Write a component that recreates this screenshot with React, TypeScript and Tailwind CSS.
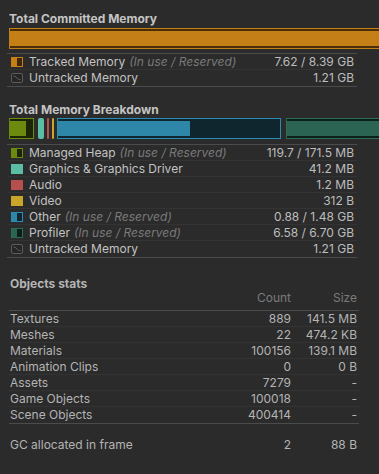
import React from "react";

type IconKind =
  | { t: "split"; border: string; fill: string; dark: string }
  | { t: "solid"; color: string }
  | { t: "untracked" };

function LegendIcon({ k }: { k: IconKind }) {
  if (k.t === "solid") {
    return <div className="w-[12px] h-[10px] shrink-0" style={{ background: k.color }} />;
  }
  if (k.t === "untracked") {
    return (
      <svg width="12" height="10" viewBox="0 0 12 10" className="shrink-0">
        <rect x="0.5" y="0.5" width="11" height="9" rx="1.5" fill="#262626" stroke="#5c5c5c" />
        <path d="M2.5 3 L5 3.8 L6.5 5.8 L9.5 6.8" fill="none" stroke="#5c5c5c" strokeWidth="1" />
      </svg>
    );
  }
  return (
    <div
      className="w-[12px] h-[10px] shrink-0 border flex"
      style={{ borderColor: k.border, background: k.dark }}
    >
      <div className="w-[5px] h-full" style={{ background: k.fill }} />
    </div>
  );
}

function LegendRow({
  icon,
  name,
  note,
  value,
  last,
}: {
  icon: IconKind;
  name: string;
  note?: boolean;
  value: string;
  last?: boolean;
}) {
  return (
    <div
      className={
        "flex items-center h-[16px] pl-[4px] pr-[3px] " +
        (last ? "" : "border-b border-[#333333]")
      }
    >
      <LegendIcon k={icon} />
      <span className="ml-[6px] text-[#c2c2c2] whitespace-nowrap">{name}</span>
      {note && (
        <span className="ml-[4px] italic text-[#7a7a7a] whitespace-nowrap">(In use / Reserved)</span>
      )}
      <span className="ml-auto text-[#bdbdbd] whitespace-nowrap">{value}</span>
    </div>
  );
}

function ObjRow({ name, count, size, last }: { name: string; count: string; size: string; last?: boolean }) {
  return (
    <div
      className={
        "grid grid-cols-[1fr_80px_66px] items-center h-[16px] pl-[1px] pr-[2px] " +
        (last ? "" : "border-b border-[#333333]")
      }
    >
      <span className="text-[#b4b4b4] whitespace-nowrap">{name}</span>
      <span className="text-right text-[#b4b4b4]">{count}</span>
      <span className="text-right text-[#b4b4b4]">{size}</span>
    </div>
  );
}

const orange = { t: "split" as const, border: "#c47f17", fill: "#c47f17", dark: "#3f2705" };
const olive = { t: "split" as const, border: "#6b8a0e", fill: "#6b8a0e", dark: "#1c2507" };
const blue = { t: "split" as const, border: "#2a8bb5", fill: "#2e86a8", dark: "#0f2530" };
const green = { t: "split" as const, border: "#2b6b58", fill: "#2b6453", dark: "#0c1f19" };

export default function App() {
  return (
    <div className="w-[379px] h-[474px] overflow-hidden bg-[#2b2b2b] font-['Inter','Noto_Sans',sans-serif] text-[12px] leading-[16px]">
      {/* Section 1 */}
      <div className="pt-[11px]">
        <div className="pl-[9px] h-[16px] font-bold text-[#c4c4c4]">Total Committed Memory</div>
        <div className="ml-[9px] mt-[1px] w-[390px] h-[21px] border border-[#c47f17] bg-[#4a2e07] pt-[2px]">
          <div className="h-[15px] bg-[#c47f17]" />
        </div>
        <div className="ml-[7px] mt-[4px] w-[350px] border-t border-b border-[#4b4b4b]">
          <LegendRow icon={orange} name="Tracked Memory" note value="7.62 / 8.39 GB" />
          <LegendRow icon={{ t: "untracked" }} name="Untracked Memory" value="1.21 GB" last />
        </div>
      </div>

      {/* Section 2 */}
      <div className="mt-[15px]">
        <div className="pl-[9px] h-[16px] font-bold text-[#c4c4c4]">Total Memory Breakdown</div>
        <div className="ml-[9px] flex h-[21px] w-[420px]">
          <div className="w-[25px] h-full border border-[#6b8a0e] bg-[#1c2507] pt-[2px] shrink-0">
            <div className="w-[16px] h-[15px] bg-[#6b8a0e]" />
          </div>
          <div className="ml-[4px] w-[6px] h-full rounded-[2px] bg-[#5bbda4] shrink-0" />
          <div className="ml-[3px] w-[2px] h-full rounded-[1px] bg-[#b5504f] shrink-0" />
          <div className="ml-[3px] w-[2px] h-full rounded-[1px] bg-[#c9a52a] shrink-0" />
          <div className="ml-[3px] w-[224px] h-full border border-[#2a8bb5] bg-[#10262f] pt-[2px] shrink-0">
            <div className="w-[132px] h-[15px] bg-[#2e86a8]" />
          </div>
          <div className="ml-[5px] w-[120px] h-full border border-[#2b6b58] bg-[#0c1f19] pt-[2px] shrink-0">
            <div className="w-full h-[15px] bg-[#2b6453]" />
          </div>
        </div>
        <div className="ml-[7px] mt-[5px] w-[350px] border-t border-b border-[#4b4b4b]">
          <LegendRow icon={olive} name="Managed Heap" note value="119.7 / 171.5 MB" />
          <LegendRow icon={{ t: "solid", color: "#5bbda4" }} name="Graphics & Graphics Driver" value="41.2 MB" />
          <LegendRow icon={{ t: "solid", color: "#b5504f" }} name="Audio" value="1.2 MB" />
          <LegendRow icon={{ t: "solid", color: "#c9a52a" }} name="Video" value="312 B" />
          <LegendRow icon={blue} name="Other" note value="0.88 / 1.48 GB" />
          <LegendRow icon={green} name="Profiler" note value="6.58 / 6.70 GB" />
          <LegendRow icon={{ t: "untracked" }} name="Untracked Memory" value="1.21 GB" last />
        </div>
      </div>

      {/* Section 3 */}
      <div className="mt-[19px]">
        <div className="pl-[10px] h-[14px] leading-[14px] font-bold text-[#b4b4b4]">Objects stats</div>
        <div className="ml-[9px] w-[350px] grid grid-cols-[1fr_80px_66px] h-[14px] leading-[14px] pr-[2px] text-[#7a7a7a]">
          <span />
          <span className="text-right">Count</span>
          <span className="text-right">Size</span>
        </div>
        <div className="ml-[9px] mt-[5px] w-[350px] border-t border-b border-[#4b4b4b]">
          <ObjRow name="Textures" count="889" size="141.5 MB" />
          <ObjRow name="Meshes" count="22" size="474.2 KB" />
          <ObjRow name="Materials" count="100156" size="139.1 MB" />
          <ObjRow name="Animation Clips" count="0" size="0 B" />
          <ObjRow name="Assets" count="7279" size="-" />
          <ObjRow name="Game Objects" count="100018" size="-" />
          <ObjRow name="Scene Objects" count="400414" size="-" last />
        </div>
        <div className="ml-[9px] mt-[13px] w-[350px]">
          <ObjRow name="GC allocated in frame" count="2" size="88 B" last />
        </div>
      </div>
    </div>
  );
}
